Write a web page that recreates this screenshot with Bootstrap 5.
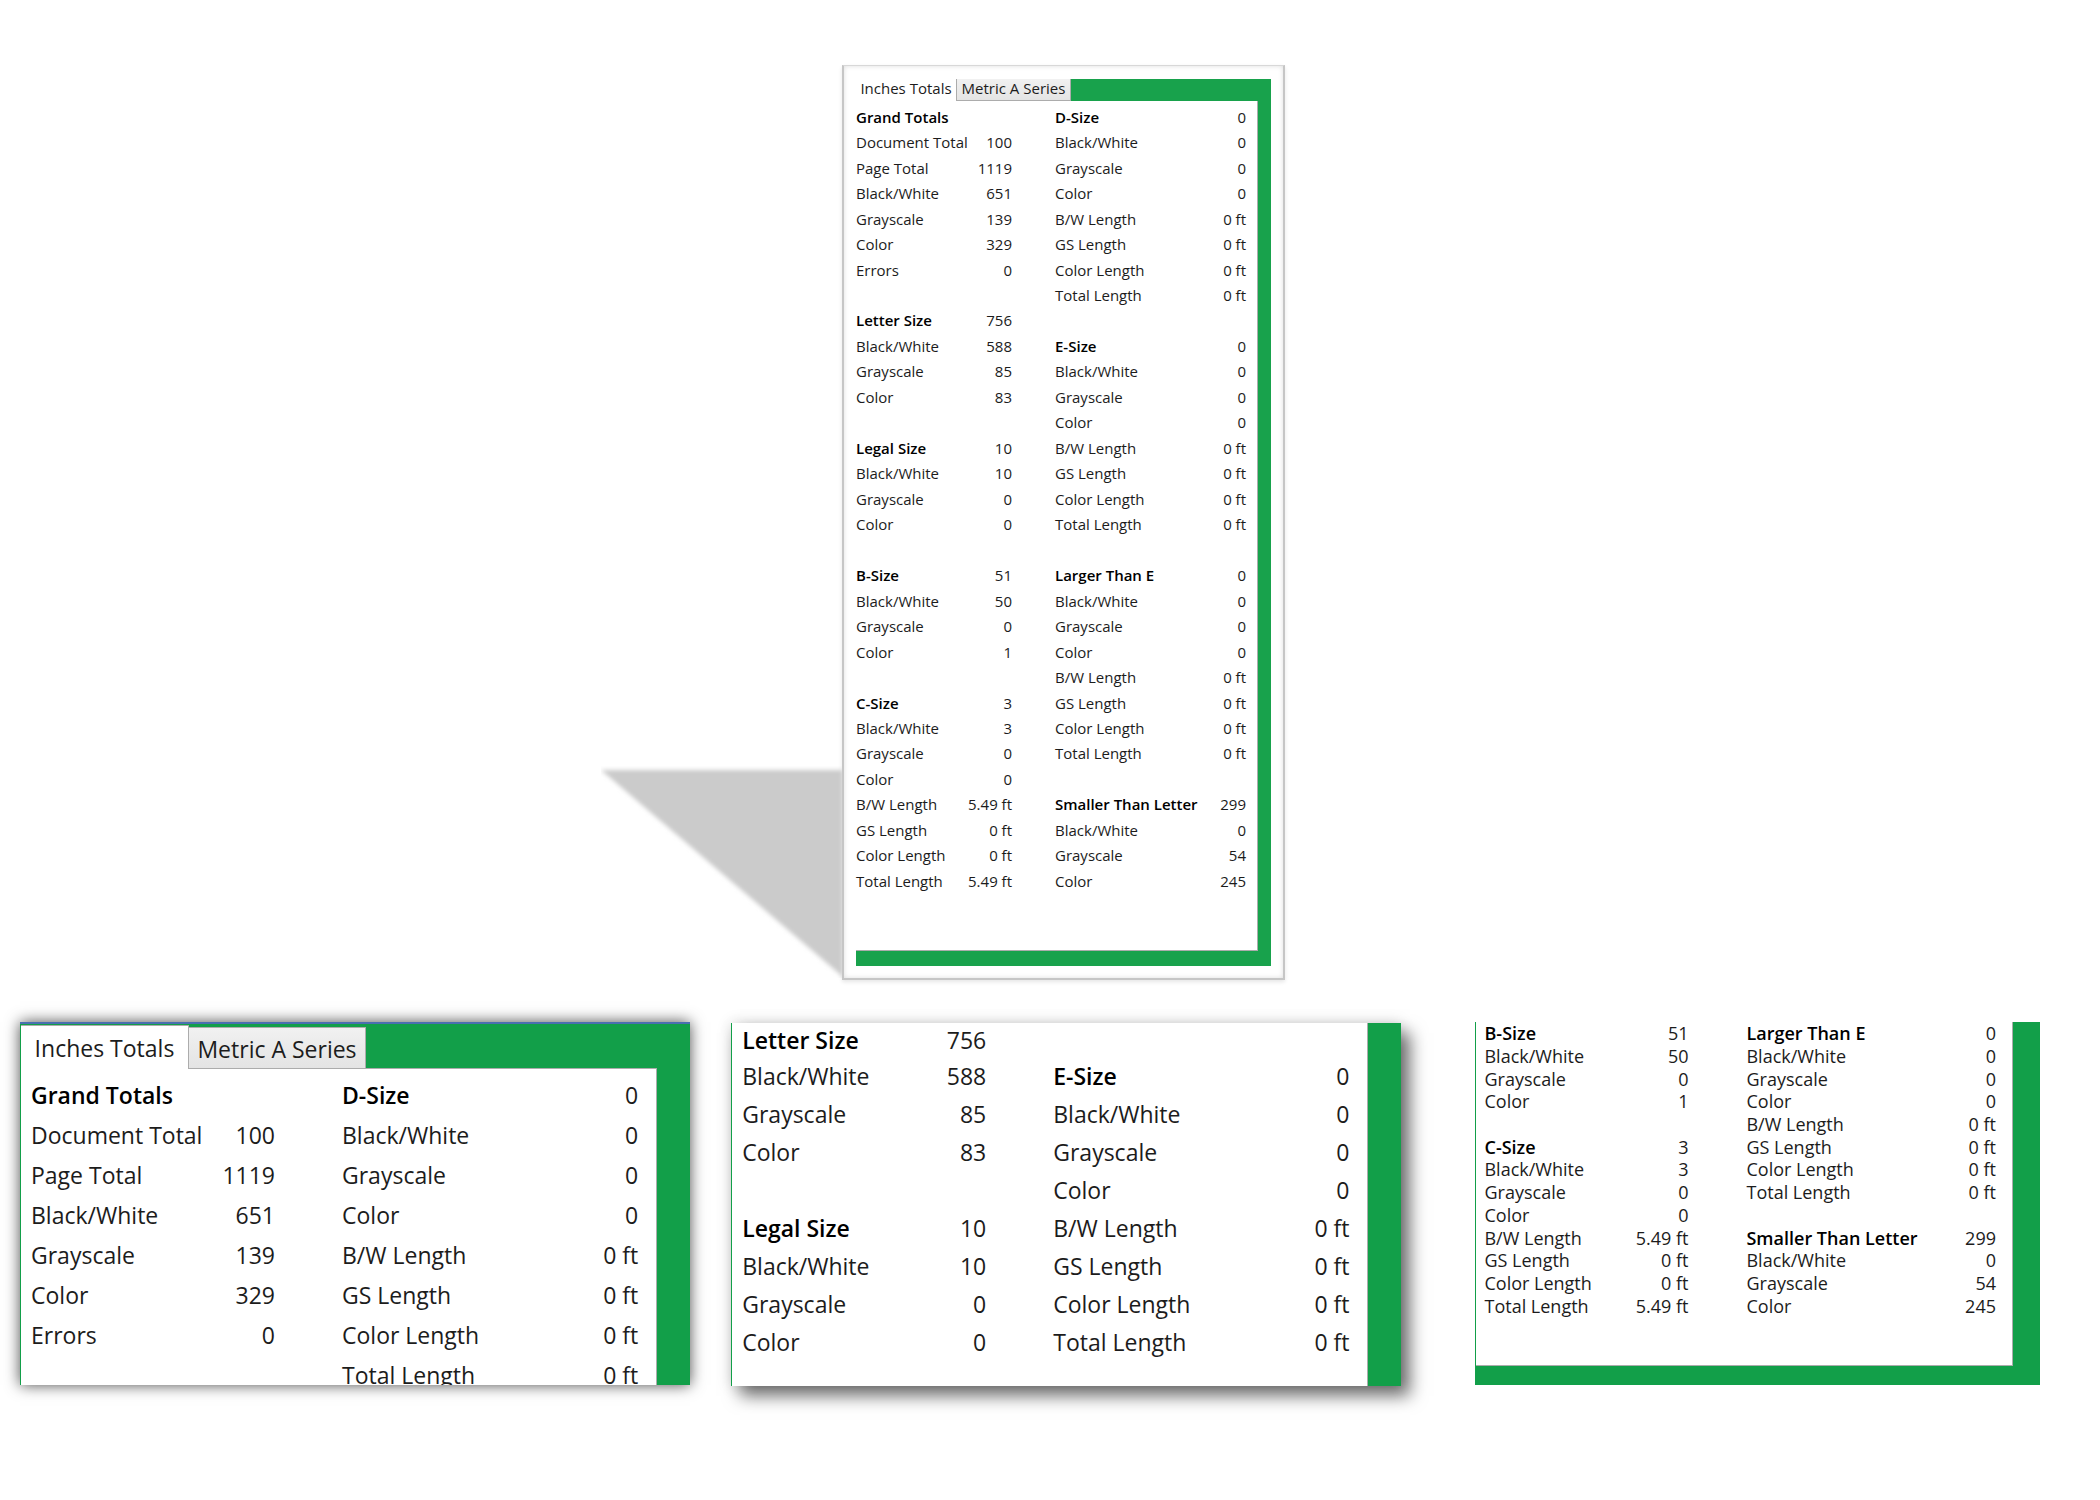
<!DOCTYPE html>
<html lang="en">
<head>
<meta charset="utf-8">
<meta name="viewport" content="width=device-width, initial-scale=1">
<title>Page totals</title>
<link href="https://cdn.jsdelivr.net/npm/bootstrap@5.3.0/dist/css/bootstrap.min.css" rel="stylesheet">
<style>
  body { font-family: "Open Sans", "Noto Sans", sans-serif; color: #1c1c1c; }
  .stage { padding: 65px 60px 42px 601px; }
  .cast-shade { width: 241px; height: 212px; margin-bottom: 2px; overflow: hidden; }
  .sheet { flex: 0 1 443px; background: #fff; border: 2px solid #c6c6c6; border-top: 1px solid #d8d8d8;
           padding: 13px 12px 12px 12px; box-shadow: inset 0 0 5px #ddd, 0 2px 4px #e6e6e6; }
  .green { background: #18a24c; }
  .sheet .green { padding: 0 13px 15px 0; }

  .tab { border: 0; background: #fff; color: inherit; padding: 0; text-align: center; white-space: nowrap; }
  .tab-off { background: linear-gradient(#f1f1f1, #e4e4e4); border: 1px solid #acacac; }
  .tab-body { background: #fff; border: 1px solid #acacac; border-left: 0; }

  .sheet .tabs { height: 22px; font-size: 15px; line-height: 17px; }
  .sheet .tab { width: 100px; padding-bottom: 4px; }
  .sheet .tab-off { width: 115px; border-top: 0; padding-bottom: 2px; }
  .sheet .tab-body { padding: 3px 11px 56px 0; }
  .sheet table { height: 790px; font-size: 15px; line-height: 20px; }

  .totals { width: 100%; table-layout: fixed; border-collapse: collapse; }
  .totals th, .totals td { padding: 0; white-space: nowrap; vertical-align: middle; font-weight: 400; }
  .totals th { text-align: left; }
  .totals td { text-align: right; }
  .totals .head { font-weight: 600; color: #000; }
  .c-name { width: 112px; } .c-num { width: 44px; } .c-gap { width: 43px; } .c-num2 { width: 38px; }

  .panels { padding: 0 60px 100px 20px; gap: 41px; }
  .panel { height: 363px; overflow: hidden; background: #129f49; padding-left: 1px; }
  .panel-wide { flex: 670 1 0; font-size: 23px; line-height: 30px; padding-right: 33px; }
  .panel-narrow { flex: 565 1 0; margin-left: 33px; font-size: 18px; line-height: 22px; padding: 0 27px 19px 1px; }
  .panel-wide .c-name { width: 180px; } .panel-wide .c-num { width: 64px; }
  .panel-wide .c-gap { width: 67px; } .panel-wide .c-num2 { width: 64px; }
  .panel-narrow .c-name { width: 134px; } .panel-narrow .c-num { width: 70px; }
  .panel-narrow .c-gap { width: 58px; } .panel-narrow .c-num2 { width: 60px; }

  .glow { border-top: 2px solid #4a6fb0; box-shadow: 0 0 14px rgba(0,0,0,.7); }
  .glow .tabs { padding-top: 1px; height: 45px; margin-bottom: -1px; align-items: flex-end; }
  .glow .tab { width: 168px; height: 44px; line-height: 34px; border: 1px solid #acacac; border-bottom: 0; border-left: 0; }
  .glow .tab-off { width: 177px; height: 42px; padding-top: 2px; border-bottom: 1px solid #acacac; }
  .glow .tab-body { padding: 6px 18px 0 10px; }
  .glow tr { height: 40px; }

  .drop { box-shadow: 9px 10px 16px rgba(0,0,0,.55), 0 0 14px rgba(0,0,0,.15); margin-top: 1px; }
  .drop .tab-body { height: 100%; padding: 0 18px 0 10px; border-width: 0 1px 0 0; }
  .drop tr { height: 38px; }
  .drop tr:first-child { height: 34px; }

  .panel-narrow .tab-body { height: 100%; padding: 0 16px 0 8px; border-top: 0; }
  .panel-narrow table { height: 295px; }
</style>
</head>
<body class="bg-white">
<main>
  <section class="stage d-flex align-items-end">
    <svg class="cast-shade flex-shrink-0" viewBox="0 0 241 212" aria-hidden="true">
      <defs><filter id="soft" x="-10%" y="-10%" width="120%" height="120%"><feGaussianBlur stdDeviation="2"/></filter></defs>
      <path d="M0 4H256V223Z" fill="#cbcbcb" filter="url(#soft)"/>
    </svg>
    <div class="sheet position-relative">
      <div class="green">
        <div class="tabs d-flex" role="tablist">
          <button type="button" class="tab" role="tab" aria-selected="true">Inches Totals</button>
          <button type="button" class="tab tab-off" role="tab" aria-selected="false">Metric A Series</button>
        </div>
        <div class="tab-body border-top-0">
          <table class="totals">
            <colgroup><col class="c-name"><col class="c-num"><col class="c-gap"><col><col class="c-num2"></colgroup>
            <tbody>
            <tr><th class="head">Grand Totals</th><td></td><td></td><th class="head">D-Size</th><td>0</td></tr>
            <tr><th>Document Total</th><td>100</td><td></td><th>Black/White</th><td>0</td></tr>
            <tr><th>Page Total</th><td>1119</td><td></td><th>Grayscale</th><td>0</td></tr>
            <tr><th>Black/White</th><td>651</td><td></td><th>Color</th><td>0</td></tr>
            <tr><th>Grayscale</th><td>139</td><td></td><th>B/W Length</th><td>0 ft</td></tr>
            <tr><th>Color</th><td>329</td><td></td><th>GS Length</th><td>0 ft</td></tr>
            <tr><th>Errors</th><td>0</td><td></td><th>Color Length</th><td>0 ft</td></tr>
            <tr><th></th><td></td><td></td><th>Total Length</th><td>0 ft</td></tr>
            <tr><th class="head">Letter Size</th><td>756</td><td></td><th></th><td></td></tr>
            <tr><th>Black/White</th><td>588</td><td></td><th class="head">E-Size</th><td>0</td></tr>
            <tr><th>Grayscale</th><td>85</td><td></td><th>Black/White</th><td>0</td></tr>
            <tr><th>Color</th><td>83</td><td></td><th>Grayscale</th><td>0</td></tr>
            <tr><th></th><td></td><td></td><th>Color</th><td>0</td></tr>
            <tr><th class="head">Legal Size</th><td>10</td><td></td><th>B/W Length</th><td>0 ft</td></tr>
            <tr><th>Black/White</th><td>10</td><td></td><th>GS Length</th><td>0 ft</td></tr>
            <tr><th>Grayscale</th><td>0</td><td></td><th>Color Length</th><td>0 ft</td></tr>
            <tr><th>Color</th><td>0</td><td></td><th>Total Length</th><td>0 ft</td></tr>
            <tr><th>&nbsp;</th><td></td><td></td><th></th><td></td></tr>
            <tr><th class="head">B-Size</th><td>51</td><td></td><th class="head">Larger Than E</th><td>0</td></tr>
            <tr><th>Black/White</th><td>50</td><td></td><th>Black/White</th><td>0</td></tr>
            <tr><th>Grayscale</th><td>0</td><td></td><th>Grayscale</th><td>0</td></tr>
            <tr><th>Color</th><td>1</td><td></td><th>Color</th><td>0</td></tr>
            <tr><th></th><td></td><td></td><th>B/W Length</th><td>0 ft</td></tr>
            <tr><th class="head">C-Size</th><td>3</td><td></td><th>GS Length</th><td>0 ft</td></tr>
            <tr><th>Black/White</th><td>3</td><td></td><th>Color Length</th><td>0 ft</td></tr>
            <tr><th>Grayscale</th><td>0</td><td></td><th>Total Length</th><td>0 ft</td></tr>
            <tr><th>Color</th><td>0</td><td></td><th></th><td></td></tr>
            <tr><th>B/W Length</th><td>5.49 ft</td><td></td><th class="head">Smaller Than Letter</th><td>299</td></tr>
            <tr><th>GS Length</th><td>0 ft</td><td></td><th>Black/White</th><td>0</td></tr>
            <tr><th>Color Length</th><td>0 ft</td><td></td><th>Grayscale</th><td>54</td></tr>
            <tr><th>Total Length</th><td>5.49 ft</td><td></td><th>Color</th><td>245</td></tr>
            </tbody>
          </table>
        </div>
      </div>
    </div>
  </section>

  <section class="panels d-flex">
    <div class="panel panel-wide glow">
      <div class="tabs d-flex" role="tablist">
        <button type="button" class="tab" role="tab" aria-selected="true">Inches Totals</button>
        <button type="button" class="tab tab-off" role="tab" aria-selected="false">Metric A Series</button>
      </div>
      <div class="tab-body">
        <table class="totals">
          <colgroup><col class="c-name"><col class="c-num"><col class="c-gap"><col><col class="c-num2"></colgroup>
          <tbody>
          <tr><th class="head">Grand Totals</th><td></td><td></td><th class="head">D-Size</th><td>0</td></tr>
          <tr><th>Document Total</th><td>100</td><td></td><th>Black/White</th><td>0</td></tr>
          <tr><th>Page Total</th><td>1119</td><td></td><th>Grayscale</th><td>0</td></tr>
          <tr><th>Black/White</th><td>651</td><td></td><th>Color</th><td>0</td></tr>
          <tr><th>Grayscale</th><td>139</td><td></td><th>B/W Length</th><td>0 ft</td></tr>
          <tr><th>Color</th><td>329</td><td></td><th>GS Length</th><td>0 ft</td></tr>
          <tr><th>Errors</th><td>0</td><td></td><th>Color Length</th><td>0 ft</td></tr>
          <tr><th></th><td></td><td></td><th>Total Length</th><td>0 ft</td></tr>
          </tbody>
        </table>
      </div>
    </div>

    <div class="panel panel-wide drop">
      <div class="tab-body">
        <table class="totals">
          <colgroup><col class="c-name"><col class="c-num"><col class="c-gap"><col><col class="c-num2"></colgroup>
          <tbody>
          <tr><th class="head">Letter Size</th><td>756</td><td></td><th></th><td></td></tr>
          <tr><th>Black/White</th><td>588</td><td></td><th class="head">E-Size</th><td>0</td></tr>
          <tr><th>Grayscale</th><td>85</td><td></td><th>Black/White</th><td>0</td></tr>
          <tr><th>Color</th><td>83</td><td></td><th>Grayscale</th><td>0</td></tr>
          <tr><th></th><td></td><td></td><th>Color</th><td>0</td></tr>
          <tr><th class="head">Legal Size</th><td>10</td><td></td><th>B/W Length</th><td>0 ft</td></tr>
          <tr><th>Black/White</th><td>10</td><td></td><th>GS Length</th><td>0 ft</td></tr>
          <tr><th>Grayscale</th><td>0</td><td></td><th>Color Length</th><td>0 ft</td></tr>
          <tr><th>Color</th><td>0</td><td></td><th>Total Length</th><td>0 ft</td></tr>
          </tbody>
        </table>
      </div>
    </div>

    <div class="panel panel-narrow">
      <div class="tab-body">
        <table class="totals">
          <colgroup><col class="c-name"><col class="c-num"><col class="c-gap"><col><col class="c-num2"></colgroup>
          <tbody>
          <tr><th class="head">B-Size</th><td>51</td><td></td><th class="head">Larger Than E</th><td>0</td></tr>
          <tr><th>Black/White</th><td>50</td><td></td><th>Black/White</th><td>0</td></tr>
          <tr><th>Grayscale</th><td>0</td><td></td><th>Grayscale</th><td>0</td></tr>
          <tr><th>Color</th><td>1</td><td></td><th>Color</th><td>0</td></tr>
          <tr><th></th><td></td><td></td><th>B/W Length</th><td>0 ft</td></tr>
          <tr><th class="head">C-Size</th><td>3</td><td></td><th>GS Length</th><td>0 ft</td></tr>
          <tr><th>Black/White</th><td>3</td><td></td><th>Color Length</th><td>0 ft</td></tr>
          <tr><th>Grayscale</th><td>0</td><td></td><th>Total Length</th><td>0 ft</td></tr>
          <tr><th>Color</th><td>0</td><td></td><th></th><td></td></tr>
          <tr><th>B/W Length</th><td>5.49 ft</td><td></td><th class="head">Smaller Than Letter</th><td>299</td></tr>
          <tr><th>GS Length</th><td>0 ft</td><td></td><th>Black/White</th><td>0</td></tr>
          <tr><th>Color Length</th><td>0 ft</td><td></td><th>Grayscale</th><td>54</td></tr>
          <tr><th>Total Length</th><td>5.49 ft</td><td></td><th>Color</th><td>245</td></tr>
          </tbody>
        </table>
      </div>
    </div>
  </section>
</main>
<script src="https://cdn.jsdelivr.net/npm/bootstrap@5.3.0/dist/js/bootstrap.bundle.min.js"></script>
</body>
</html>
